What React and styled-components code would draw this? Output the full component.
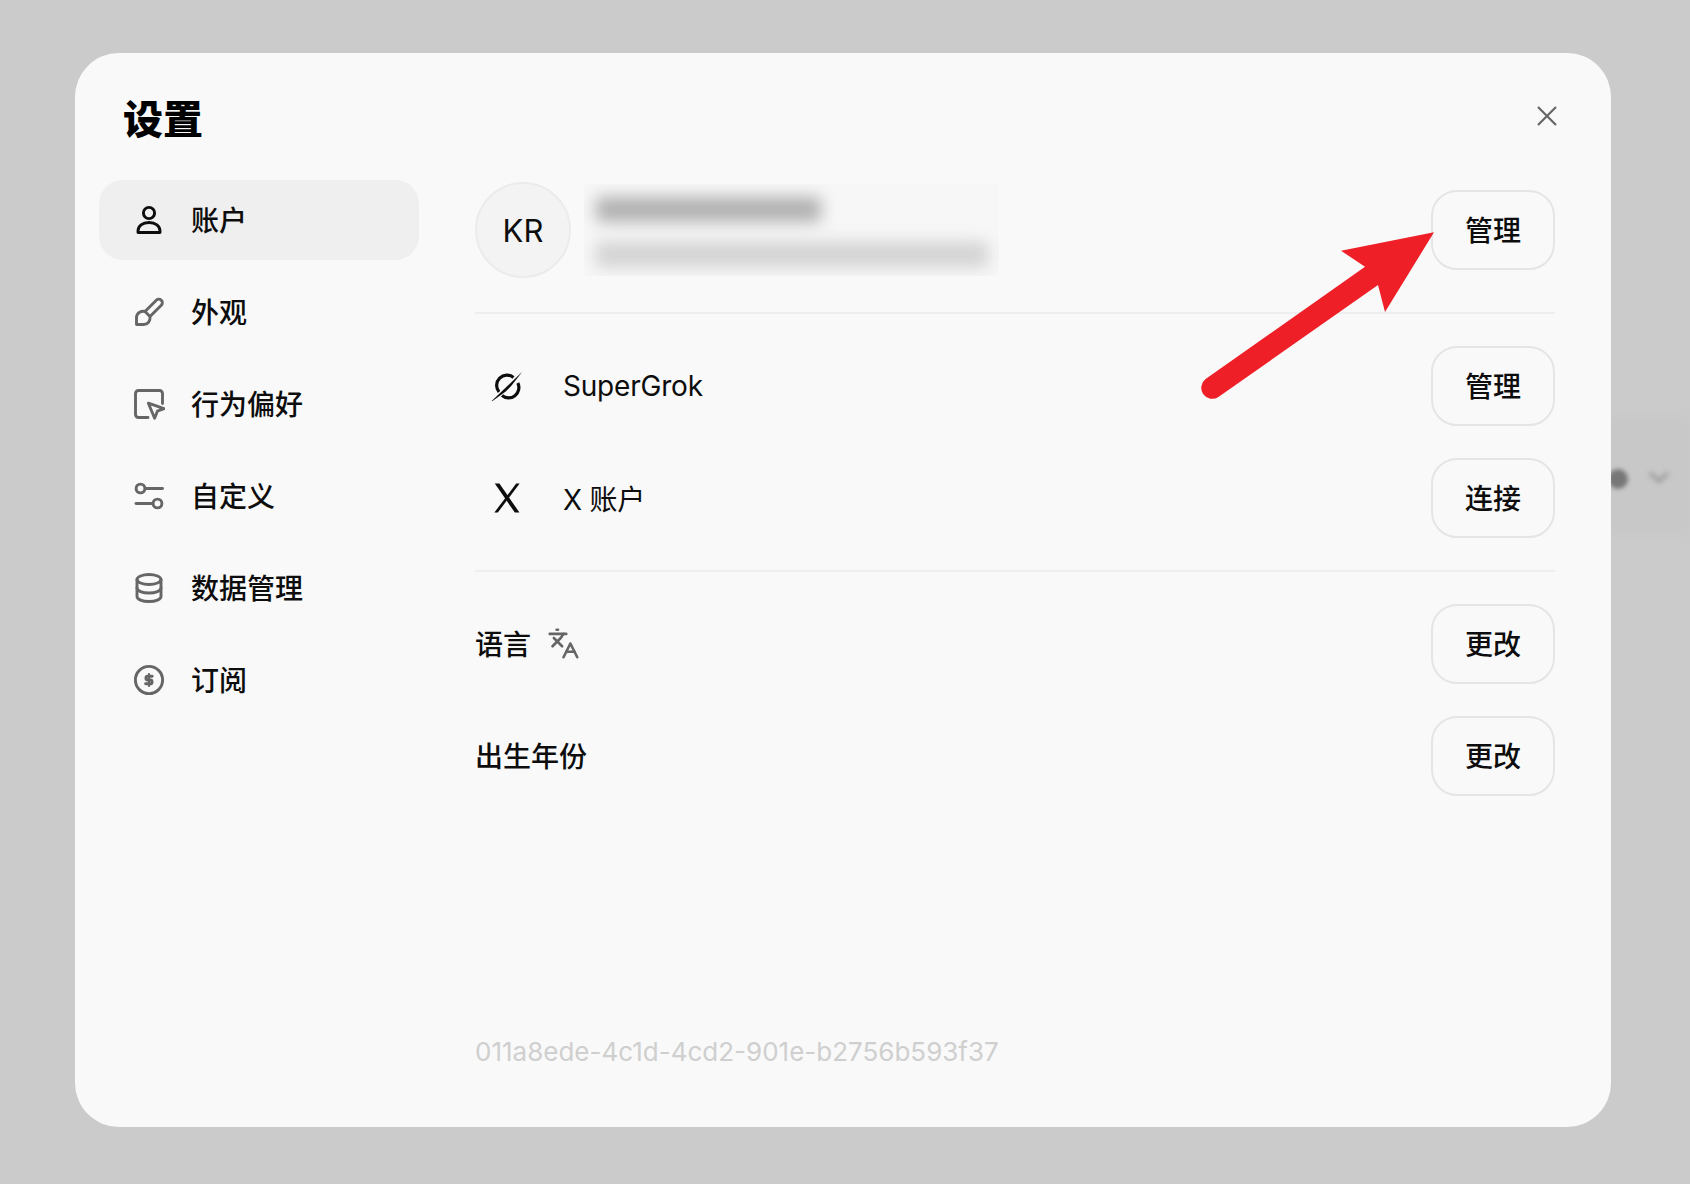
import React from 'react';
import styled, { createGlobalStyle } from 'styled-components';
import { Languages } from 'lucide-react';

const Global = createGlobalStyle`
    html, body {
        margin: 0;
        padding: 0;
        background: #cbcbcb;
    }
    * {
        box-sizing: border-box;
    }
`

const Page_div = styled.div`
    position: relative;
    width: 1690px;
    height: 1184px;
    overflow: hidden;
    padding: 53px 0 0 75px;
    background: #cbcbcb;
    font-family: Inter, "Noto Sans CJK SC", sans-serif;
    color: #0d0d0d;
`

// what shows through behind the dialog
const Backdrop_band = styled.div`
    position: absolute;
    left: 1500px;
    top: 416px;
    width: 190px;
    height: 120px;
    background: #c8c8c8;
    filter: blur(3px);
`
const Backdrop_dot = styled.div`
    position: absolute;
    left: 1608px;
    top: 469px;
    width: 20px;
    height: 20px;
    border-radius: 50%;
    background: #777;
    filter: blur(2px);
`
const Backdrop_chevron = styled.svg`
    position: absolute;
    left: 1646px;
    top: 468px;
    width: 26px;
    height: 20px;
    filter: blur(2.5px);
`

const Modal_div = styled.div`
    position: relative;
    width: 1536px;
    height: 1074px;
    border-radius: 44px;
    background: #f9f9f9;
    display: flex;
    flex-direction: column;
`

const Header_div = styled.div`
    height: 127px;
    flex-shrink: 0;
    padding: 44px 48px 0 48px;
    display: flex;
    justify-content: space-between;
    align-items: flex-start;
`
const Title_h = styled.h1`
    margin: 0;
    font-size: 40px;
    line-height: 46px;
    font-weight: 900;
    color: #000;
`
const Close_button = styled.button`
    width: 32px;
    height: 32px;
    margin-top: 3px;
    padding: 0;
    border: none;
    background: none;
    display: flex;
    align-items: center;
    justify-content: center;
    color: #666;
`

const Body_div = styled.div`
    flex: 1;
    min-height: 0;
    display: flex;
    padding: 0 56px 0 24px;
    gap: 56px;
`

const Sidebar_nav = styled.nav`
    width: 320px;
    flex-shrink: 0;
    display: flex;
    flex-direction: column;
    gap: 12px;
`
const Nav_item = styled.div`
    height: 80px;
    padding-left: 34px;
    display: flex;
    align-items: center;
    gap: 26px;
    border-radius: 24px;
    background: ${props => props.$active ? '#efefef' : 'transparent'};

    svg {
        color: ${props => props.$active ? '#0d0d0d' : '#666'};
    }
`
const Nav_label = styled.span`
    font-size: 28px;
    font-weight: 500;
    padding-bottom: 2px;
`

const Content_div = styled.div`
    flex: 1;
    min-width: 0;
    display: flex;
    flex-direction: column;
    padding-bottom: 59px;
`
const Profile_row = styled.div`
    display: flex;
    align-items: center;
    justify-content: space-between;
    margin-top: 2px;
    padding-bottom: 34px;
    border-bottom: 2px solid #eeeeee;
`
const Profile_left = styled.div`
    display: flex;
    align-items: center;
    gap: 13px;
`
const Avatar_div = styled.div`
    width: 96px;
    height: 96px;
    border-radius: 50%;
    border: 2px solid #ebebeb;
    background: #f3f3f3;
    display: flex;
    align-items: center;
    justify-content: center;
    font-size: 31px;
`
const Blur_box = styled.div`
    width: 415px;
    height: 92px;
    overflow: hidden;
    background: #f7f7f7;
    padding: 13px 12px 0;
    display: flex;
    flex-direction: column;
    gap: 20px;
`
const Blur_bar = styled.div`
    height: 25px;
    width: ${props => props.$width}px;
    background: ${props => props.$color};
    border-radius: 4px;
    filter: blur(8px);
`

const Section_div = styled.div`
    display: flex;
    flex-direction: column;
    gap: 32px;
    padding: 32px 0;
    border-bottom: ${props => props.$line ? '2px solid #eeeeee' : 'none'};
`
const Row_div = styled.div`
    display: flex;
    align-items: center;
    justify-content: space-between;
`
const Row_left = styled.div`
    display: flex;
    align-items: center;
    font-size: 28px;
    font-weight: ${props => props.$brand ? 400 : 500};
    letter-spacing: ${props => props.$brand ? '-0.2px' : 0};
    padding-bottom: ${props => props.$brand ? 0 : '2px'};
`
const Brand_icon = styled.span`
    width: 88px;
    display: flex;
    padding-left: 16px;
    align-items: center;
`
const Lang_icon = styled.span`
    margin-left: 16px;
    display: flex;
    color: #666;
`
const Action_button = styled.button`
    width: 124px;
    height: 80px;
    border: 2px solid #e5e5e5;
    border-radius: 26px;
    background: #f9f9f9;
    font: inherit;
    font-size: 28px;
    font-weight: 500;
    color: #0d0d0d;
    padding: 0 0 3px;
`

const Id_div = styled.div`
    margin-top: auto;
    font-size: 26px;
    line-height: 32px;
    color: #cfcfcf;
`

const Arrow_svg = styled.svg`
    position: absolute;
    left: 1190px;
    top: 220px;
    width: 260px;
    height: 190px;
`

const Line_icon = ({ children }) => (
    <svg width="32" height="32" viewBox="0 0 32 32" fill="none" stroke="currentColor" strokeWidth="2.9" strokeLinecap="round" strokeLinejoin="round">
        {children}
    </svg>
);

const menu = [
    {
        name: '账户',
        icon: <>
            <circle cx="16" cy="9" r="5.6" />
            <path d="M5 28.5v-1.5c0-5 4.5-8.5 11-8.5s11 3.5 11 8.5v1.5z" />
        </>,
    },
    {
        name: '外观',
        icon: <>
            <path d="M12 15.5L23.3 4.2a3.5 3.5 0 0 1 5 5L17 20.5" />
            <path d="M12 15.5C8.5 14.5 4 16.5 3.5 21v7.5H11c4 0 6.5-3.5 6-8z" />
        </>,
    },
    {
        name: '行为偏好',
        icon: <>
            <path d="M15 29.5H5.5a3 3 0 0 1-3-3V5.5a3 3 0 0 1 3-3h21a3 3 0 0 1 3 3v10" />
            <path d="M15.4 15.2l15.6 5.4-6.6 2.6-2.8 7z" />
        </>,
    },
    {
        name: '自定义',
        icon: <>
            <circle cx="7.5" cy="8.5" r="4.4" />
            <path d="M12.5 8.5h17" />
            <circle cx="24.5" cy="23.5" r="4.4" />
            <path d="M3 23.5h16.5" />
        </>,
    },
    {
        name: '数据管理',
        icon: <>
            <ellipse cx="16" cy="7.5" rx="12" ry="5" />
            <path d="M4 7.5v17c0 2.8 5.4 5 12 5s12-2.2 12-5v-17" />
            <path d="M4 16c0 2.8 5.4 5 12 5s12-2.2 12-5" />
        </>,
    },
    {
        name: '订阅',
        icon: <>
            <circle cx="16" cy="16" r="13.6" />
            <path d="M19.2 12.2h-4.4a1.9 1.9 0 0 0 0 3.8h2.4a1.9 1.9 0 0 1 0 3.8h-4.6" />
            <path d="M16 10v12" strokeWidth="2.2" />
        </>,
    },
];

const Grok_icon = () => (
    <svg width="32" height="32" viewBox="0 0 32 32">
        <path d="M22.5 7.5A10.3 10.3 0 0 0 8 22M11 25.5A10.3 10.3 0 0 0 26.8 13" fill="none" stroke="#0d0d0d" strokeWidth="3.2" />
        <path d="M31.3 1.7L.7 31l.5.3 13.5-9.8 5.5-5.5z" fill="#0d0d0d" />
    </svg>
);

const X_icon = () => (
    <svg width="32" height="32" viewBox="0 0 32 32">
        <path d="M3.8 1.5h4.6L28.4 30.5H23.8z" fill="#0d0d0d" />
        <path d="M25.2 1.5h3.4L6.8 30.5H3.4z" fill="#0d0d0d" />
    </svg>
);

const App = () => {
    return (
        <Page_div>
            <Global />
            <Backdrop_band />
            <Backdrop_dot />
            <Backdrop_chevron viewBox="0 0 26 20" fill="none" stroke="#a0a0a0" strokeWidth="4">
                <path d="M4 5l9 8 9-8" />
            </Backdrop_chevron>

            <Modal_div>
                <Header_div>
                    <Title_h>设置</Title_h>
                    <Close_button>
                        <svg width="22" height="22" viewBox="0 0 22 22" fill="none" stroke="currentColor" strokeWidth="2.2">
                            <path d="M2 2l18 18M20 2L2 20" />
                        </svg>
                    </Close_button>
                </Header_div>

                <Body_div>
                    <Sidebar_nav>
                        {menu.map((item, i) => (
                            <Nav_item key={item.name} $active={i === 0}>
                                <Line_icon>{item.icon}</Line_icon>
                                <Nav_label>{item.name}</Nav_label>
                            </Nav_item>
                        ))}
                    </Sidebar_nav>

                    <Content_div>
                        <Profile_row>
                            <Profile_left>
                                <Avatar_div>KR</Avatar_div>
                                <Blur_box>
                                    <Blur_bar $width={225} $color="#b0b0b0" />
                                    <Blur_bar $width={392} $color="#d2d2d2" />
                                </Blur_box>
                            </Profile_left>
                            <Action_button>管理</Action_button>
                        </Profile_row>

                        <Section_div $line>
                            <Row_div>
                                <Row_left $brand>
                                    <Brand_icon><Grok_icon /></Brand_icon>
                                    SuperGrok
                                </Row_left>
                                <Action_button>管理</Action_button>
                            </Row_div>
                            <Row_div>
                                <Row_left $brand>
                                    <Brand_icon><X_icon /></Brand_icon>
                                    X 账户
                                </Row_left>
                                <Action_button>连接</Action_button>
                            </Row_div>
                        </Section_div>

                        <Section_div>
                            <Row_div>
                                <Row_left>
                                    语言
                                    <Lang_icon><Languages size={33} strokeWidth={1.9} /></Lang_icon>
                                </Row_left>
                                <Action_button>更改</Action_button>
                            </Row_div>
                            <Row_div>
                                <Row_left>出生年份</Row_left>
                                <Action_button>更改</Action_button>
                            </Row_div>
                        </Section_div>

                        <Id_div>011a8ede-4c1d-4cd2-901e-b2756b593f37</Id_div>
                    </Content_div>
                </Body_div>
            </Modal_div>

            <Arrow_svg viewBox="1190 220 260 190">
                <path d="M1434 232.3L1341 250.7L1365 266.7L1205.6 379A11.05 11.05 0 0 0 1218.4 397L1378 285L1385 312Z" fill="#ee1f27" />
            </Arrow_svg>
        </Page_div>
    );
}

export default App;
